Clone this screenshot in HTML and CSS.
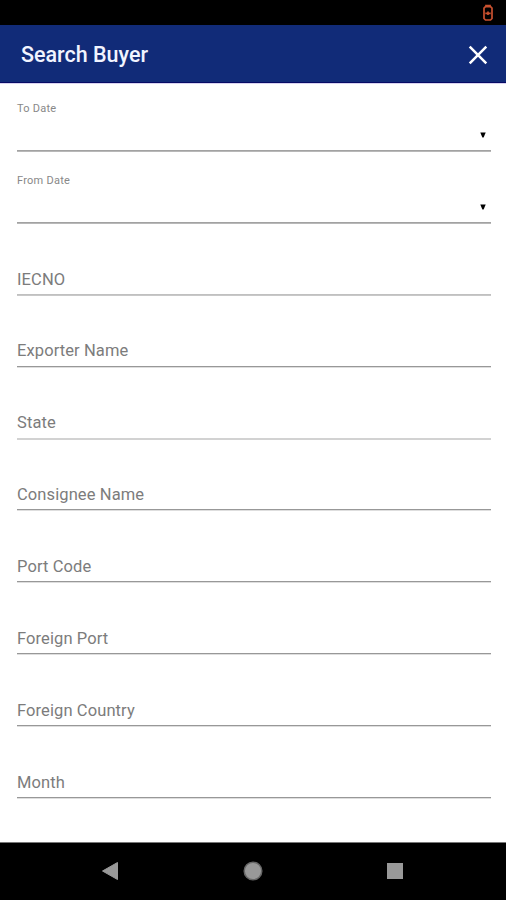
FILE: index.html
```html
<!DOCTYPE html>
<html lang="en">
<head>
<meta charset="utf-8">
<title>Search Buyer</title>
<link rel="stylesheet" href="styles.css">
</head>
<body>
<div class="status">
  <svg width="12" height="18" viewBox="0 0 12 18" fill="none" stroke="#c9512f" stroke-width="1.700"><path d="M4 2.500V1.700h4v.8M3.500 2.700h5l1.500 1.500v10.300l-1.500 1.500h-5L2 14.500V4.200zM3.300 9.300h5.400M6 7.500v3.600"/></svg>
</div>
<header class="bar">
  <h1 class="title">Search Buyer</h1>
  <svg class="close" width="20" height="20" viewBox="0 0 20 20" stroke="#fff" stroke-width="2.500"><path d="M1.700 1.700l16.600 16.600M18.300 1.700L1.700 18.300"/></svg>
</header>
<main class="form">
  <div class="field date"><span class="label">To Date</span><svg class="caret" width="6" height="6" viewBox="0 0 6 6"><path d="M.3.5h5.400L3.600 5.500H2.400z"/></svg></div>
  <div class="field date"><span class="label">From Date</span><svg class="caret" width="6" height="6" viewBox="0 0 6 6"><path d="M.3.5h5.400L3.600 5.500H2.400z"/></svg></div>
  <div class="field soft"><span>IECNO</span></div>
  <div class="field"><span>Exporter Name</span></div>
  <div class="field wide"><span>State</span></div>
  <div class="field"><span>Consignee Name</span></div>
  <div class="field"><span>Port Code</span></div>
  <div class="field"><span>Foreign Port</span></div>
  <div class="field"><span>Foreign Country</span></div>
  <div class="field"><span>Month</span></div>
</main>
<nav class="nav">
  <svg width="18" height="20" viewBox="0 0 18 20"><path d="M1.500 10L16.500 1.500v17z" fill="#999" stroke="#999"/></svg>
  <svg width="20" height="20" viewBox="0 0 20 20"><circle cx="10" cy="10" r="8.800" fill="#999" stroke="#666" stroke-width="1.500"/></svg>
  <svg width="18" height="20" viewBox="0 0 18 20"><path d="M1 2h16v16H1z" fill="#999"/></svg>
</nav>
</body>
</html>
```

FILE: styles.css
```css
* { box-sizing: border-box; }
body {
  margin: 0;
  height: 900px;
  display: flex;
  flex-direction: column;
  background: #fff;
  font-family: Roboto, "Liberation Sans", sans-serif;
  overflow: hidden;
}
.status {
  height: 25px;
  flex: none;
  background: #000;
  display: flex;
  justify-content: flex-end;
  padding: 4px 12px 0 0;
}
.bar {
  height: 58px;
  flex: none;
  background: #112b78;
  border-bottom: 1px solid #070a65;
  box-shadow: 0 1px #d9d3f0;
  display: flex;
  align-items: center;
  justify-content: space-between;
  padding: 2px 18px 0 21px;
}
.title {
  margin: 0;
  color: #f1f4ff;
  font-size: 21.5px;
  font-weight: 500;
  line-height: 28px;
}
.form {
  flex: 1;
  padding: 0 15px 0 17px;
  display: grid;
  grid-template-rows: 68px;
  grid-auto-rows: 71.89px;
  align-content: start;
}
.field {
  display: flex;
  align-items: flex-end;
  border-bottom: 1px solid #989898;
  box-shadow: 0 1px #dedede;
  padding-bottom: 4.300px;
  color: #7c7c7c;
  font-size: 16.5px;
  line-height: 20px;
  letter-spacing: .1px;
}
.soft { border-color: #c0c0c0; box-shadow: 0 1px #c8c8c8; padding-bottom: 4px; }
.wide { border-color: #d2d2d2; box-shadow: 0 1px #d2d2d2; }
.date {
  justify-content: space-between;
  padding: 0 5px 12px 0;
  border-color: #a2a2a2;
  box-shadow: 0 1px #b8b8b8;
}
.label {
  font-size: 11px;
  line-height: 14px;
  color: #888;
  margin-bottom: 22px;
  letter-spacing: .25px;
}
.nav {
  height: 58px;
  flex: none;
  background: #000;
  border-top: 1px solid #777;
  display: flex;
  justify-content: space-between;
  align-items: center;
  padding: 0 102px 1px 101px;
}
```
